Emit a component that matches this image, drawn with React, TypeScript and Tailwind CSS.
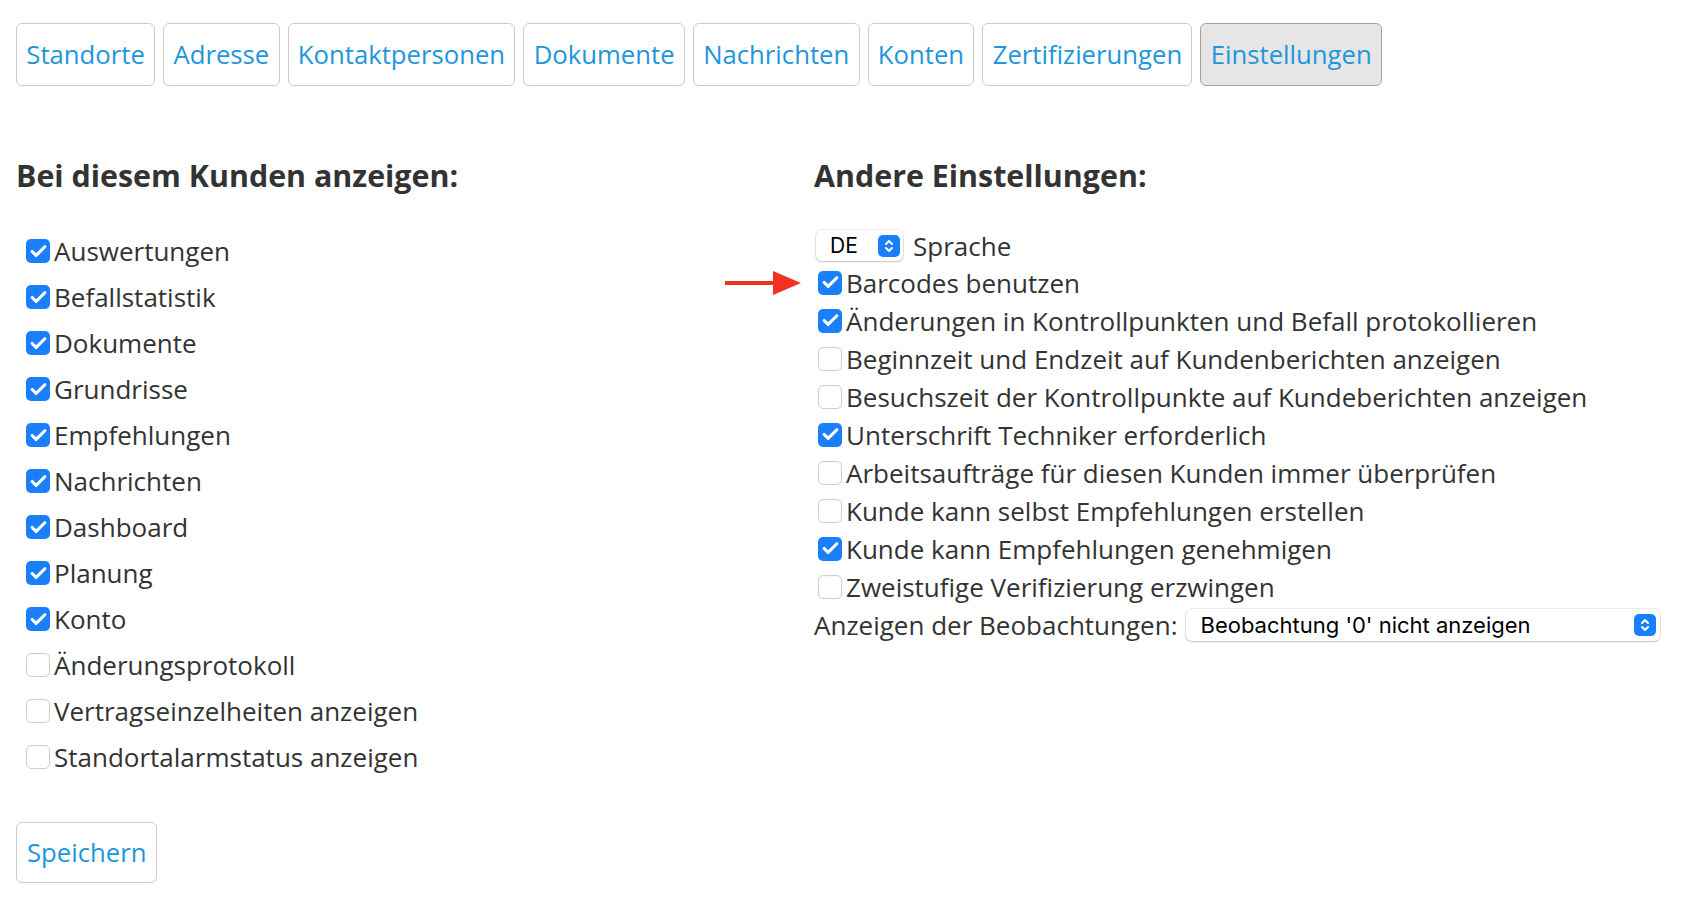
import { Check } from 'lucide-react'

const tabs = [
  'Standorte',
  'Adresse',
  'Kontaktpersonen',
  'Dokumente',
  'Nachrichten',
  'Konten',
  'Zertifizierungen',
  'Einstellungen',
]

const leftOptions: [string, boolean][] = [
  ['Auswertungen', true],
  ['Befallstatistik', true],
  ['Dokumente', true],
  ['Grundrisse', true],
  ['Empfehlungen', true],
  ['Nachrichten', true],
  ['Dashboard', true],
  ['Planung', true],
  ['Konto', true],
  ['Änderungsprotokoll', false],
  ['Vertragseinzelheiten anzeigen', false],
  ['Standortalarmstatus anzeigen', false],
]

const rightOptions: [string, boolean][] = [
  ['Barcodes benutzen', true],
  ['Änderungen in Kontrollpunkten und Befall protokollieren', true],
  ['Beginnzeit und Endzeit auf Kundenberichten anzeigen', false],
  ['Besuchszeit der Kontrollpunkte auf Kundeberichten anzeigen', false],
  ['Unterschrift Techniker erforderlich', true],
  ['Arbeitsaufträge für diesen Kunden immer überprüfen', false],
  ['Kunde kann selbst Empfehlungen erstellen', false],
  ['Kunde kann Empfehlungen genehmigen', true],
  ['Zweistufige Verifizierung erzwingen', false],
]

function Box({ checked }: { checked: boolean }) {
  if (checked) {
    return (
      <span className="flex h-[24px] w-[24px] shrink-0 items-center justify-center rounded-[5px] bg-[#1a7ffa]">
        <Check className="h-[19px] w-[19px] text-white" strokeWidth={4} />
      </span>
    )
  }
  return (
    <span className="h-[24px] w-[24px] shrink-0 rounded-[5px] border border-[#cfcfcf] bg-white shadow-[inset_0_1px_1px_rgba(0,0,0,0.04)]" />
  )
}

function Stepper() {
  return (
    <span className="flex h-[22px] w-[22px] items-center justify-center rounded-[5px] bg-[#1a7ffa]">
      <svg width="10" height="14" viewBox="0 0 10 14" fill="none" stroke="white" strokeWidth="2" strokeLinecap="round" strokeLinejoin="round">
        <path d="M2 5 L5 2 L8 5" />
        <path d="M2 9 L5 12 L8 9" />
      </svg>
    </span>
  )
}

export default function App() {
  return (
    <div className="min-h-[908px] bg-white pl-[16px] pt-[23px] font-['Open_Sans',sans-serif] text-[26px] text-[#333]">
      <div className="flex gap-[8px] text-[25.7px]">
        {tabs.map((t) => (
          <div
            key={t}
            className={`rounded-[6px] border px-[9.3px] py-[11px] leading-[39px] text-[#2196db] ${
              t === 'Einstellungen' ? 'border-[#a3a3a3] bg-[#e6e6e6]' : 'border-[#cccccc] bg-white'
            }`}
          >
            {t}
          </div>
        ))}
      </div>

      <div className="mt-[72px] grid grid-cols-[798px_1fr]">
        <div>
          <h2 className="text-[30.4px] font-bold leading-[35px]">Bei diesem Kunden anzeigen:</h2>
          <div className="mt-[35px] pl-[10px]">
            {leftOptions.map(([label, checked]) => (
              <div key={label} className="flex h-[46px] items-center gap-[4px]">
                <Box checked={checked} />
                <span className="leading-[30px]">{label}</span>
              </div>
            ))}
          </div>
          <button className="mt-[42px] rounded-[6px] border border-[#cccccc] bg-white px-[10px] py-[10px] text-[25.7px] leading-[39px] text-[#2196db]">
            Speichern
          </button>
        </div>

        <div>
          <h2 className="text-[30.4px] font-bold leading-[35px]">Andere Einstellungen:</h2>
          <div className="mt-[34.5px]">
            <div className="flex h-[36px] items-center gap-[10px] pl-[2px]">
              <div className="flex h-[31px] w-[87px] items-center justify-between rounded-[6px] bg-white pl-[14px] pr-[3px] font-['Inter',sans-serif] text-[21px] text-black shadow-[0_0_0_1px_rgba(0,0,0,0.07),0_1px_2px_rgba(0,0,0,0.18)]">
                <span>DE</span>
                <Stepper />
              </div>
              <span className="leading-[30px]">Sprache</span>
            </div>
            {rightOptions.map(([label, checked], i) => (
              <div key={label} className="relative flex h-[38px] items-center gap-[4px] pl-[4px]">
                {i === 0 && (
                  <svg className="absolute left-[-89px] top-[7px]" width="76" height="24" viewBox="0 0 76 24">
                    <rect x="0" y="10" width="52" height="4" fill="#f0321e" />
                    <path d="M48 0 L76 12 L48 24 Z" fill="#f0321e" />
                  </svg>
                )}
                <Box checked={checked} />
                <span className="leading-[30px]">{label}</span>
              </div>
            ))}
            <div className="flex h-[39px] items-center gap-[9px]">
              <span className="leading-[30px]">Anzeigen der Beobachtungen:</span>
              <div className="flex h-[32px] w-[474px] items-center justify-between rounded-[6px] bg-white pl-[14px] pr-[4px] font-['Inter',sans-serif] text-[22px] text-black shadow-[0_0_0_1px_rgba(0,0,0,0.07),0_1px_2px_rgba(0,0,0,0.18)]">
                <span>Beobachtung '0' nicht anzeigen</span>
                <Stepper />
              </div>
            </div>
          </div>
        </div>
      </div>
    </div>
  )
}
